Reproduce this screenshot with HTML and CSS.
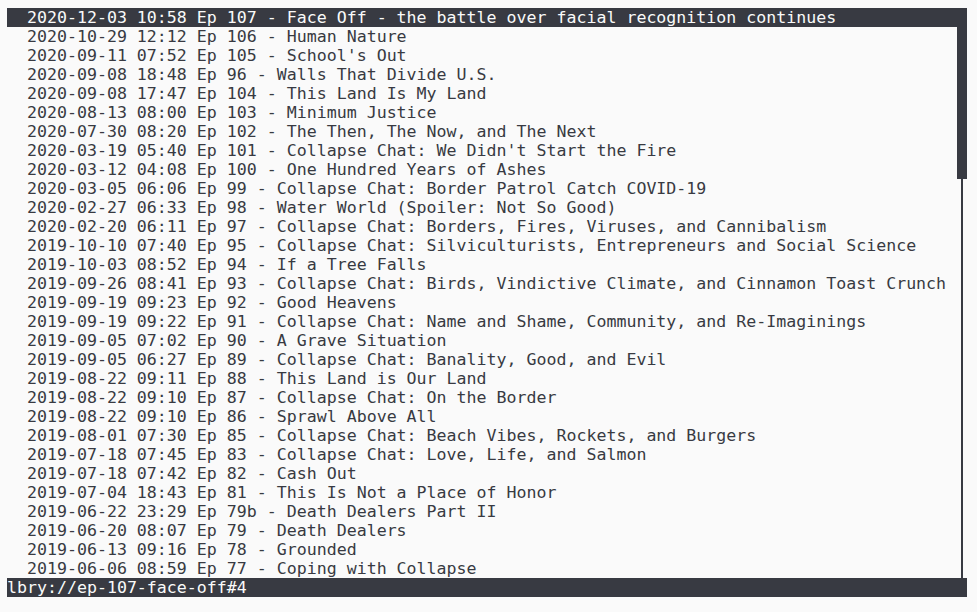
FILE: index.html
```html
<!DOCTYPE html>
<html>
<head>
<meta charset="utf-8">
<link rel="stylesheet" href="styles.css">
</head>
<body>
<div class="screen">
  <div class="main">
    <ul class="list">
      <li class="row selected">  2020-12-03 10:58 Ep 107 - Face Off - the battle over facial recognition continues</li>
      <li class="row">  2020-10-29 12:12 Ep 106 - Human Nature</li>
      <li class="row">  2020-09-11 07:52 Ep 105 - School's Out</li>
      <li class="row">  2020-09-08 18:48 Ep 96 - Walls That Divide U.S.</li>
      <li class="row">  2020-09-08 17:47 Ep 104 - This Land Is My Land</li>
      <li class="row">  2020-08-13 08:00 Ep 103 - Minimum Justice</li>
      <li class="row">  2020-07-30 08:20 Ep 102 - The Then, The Now, and The Next</li>
      <li class="row">  2020-03-19 05:40 Ep 101 - Collapse Chat: We Didn't Start the Fire</li>
      <li class="row">  2020-03-12 04:08 Ep 100 - One Hundred Years of Ashes</li>
      <li class="row">  2020-03-05 06:06 Ep 99 - Collapse Chat: Border Patrol Catch COVID-19</li>
      <li class="row">  2020-02-27 06:33 Ep 98 - Water World (Spoiler: Not So Good)</li>
      <li class="row">  2020-02-20 06:11 Ep 97 - Collapse Chat: Borders, Fires, Viruses, and Cannibalism</li>
      <li class="row">  2019-10-10 07:40 Ep 95 - Collapse Chat: Silviculturists, Entrepreneurs and Social Science</li>
      <li class="row">  2019-10-03 08:52 Ep 94 - If a Tree Falls</li>
      <li class="row">  2019-09-26 08:41 Ep 93 - Collapse Chat: Birds, Vindictive Climate, and Cinnamon Toast Crunch</li>
      <li class="row">  2019-09-19 09:23 Ep 92 - Good Heavens</li>
      <li class="row">  2019-09-19 09:22 Ep 91 - Collapse Chat: Name and Shame, Community, and Re-Imaginings</li>
      <li class="row">  2019-09-05 07:02 Ep 90 - A Grave Situation</li>
      <li class="row">  2019-09-05 06:27 Ep 89 - Collapse Chat: Banality, Good, and Evil</li>
      <li class="row">  2019-08-22 09:11 Ep 88 - This Land is Our Land</li>
      <li class="row">  2019-08-22 09:10 Ep 87 - Collapse Chat: On the Border</li>
      <li class="row">  2019-08-22 09:10 Ep 86 - Sprawl Above All</li>
      <li class="row">  2019-08-01 07:30 Ep 85 - Collapse Chat: Beach Vibes, Rockets, and Burgers</li>
      <li class="row">  2019-07-18 07:45 Ep 83 - Collapse Chat: Love, Life, and Salmon</li>
      <li class="row">  2019-07-18 07:42 Ep 82 - Cash Out</li>
      <li class="row">  2019-07-04 18:43 Ep 81 - This Is Not a Place of Honor</li>
      <li class="row">  2019-06-22 23:29 Ep 79b - Death Dealers Part II</li>
      <li class="row">  2019-06-20 08:07 Ep 79 - Death Dealers</li>
      <li class="row">  2019-06-13 09:16 Ep 78 - Grounded</li>
      <li class="row">  2019-06-06 08:59 Ep 77 - Coping with Collapse</li>
    </ul>
    <div class="scrollbar">
      <div class="thumb"></div>
      <div class="track"></div>
    </div>
  </div>
  <div class="status">lbry://ep-107-face-off#4</div>
</div>
</body>
</html>
```
FILE: styles.css
```css
html, body {
  margin: 0;
  padding: 0;
  background: #fafafa;
}
body {
  padding: 8px 10px 0 7px;
  font-family: "DejaVu Sans Mono", monospace;
  font-size: 16.6px;
  line-height: 19px;
  color: #383a42;
}
.screen {
  width: 960px;
  display: flex;
  flex-direction: column;
}
.main {
  display: grid;
  grid-template-columns: 950px 10px;
  height: 570px;
}
.list {
  list-style: none;
  margin: 0;
  padding: 0;
}
.row {
  white-space: pre;
  height: 19px;
  overflow: hidden;
}
.row.selected {
  background: #383a42;
  color: #fafafa;
  width: 960px;
}
.scrollbar {
  display: flex;
  flex-direction: column;
  align-items: center;
}
.thumb {
  width: 10px;
  height: 171px;
  background: #383a42;
}
.track {
  flex: 1;
  width: 2px;
  background: #383a42;
}
.status {
  height: 19px;
  background: #383a42;
  color: #fafafa;
  white-space: pre;
}
```
